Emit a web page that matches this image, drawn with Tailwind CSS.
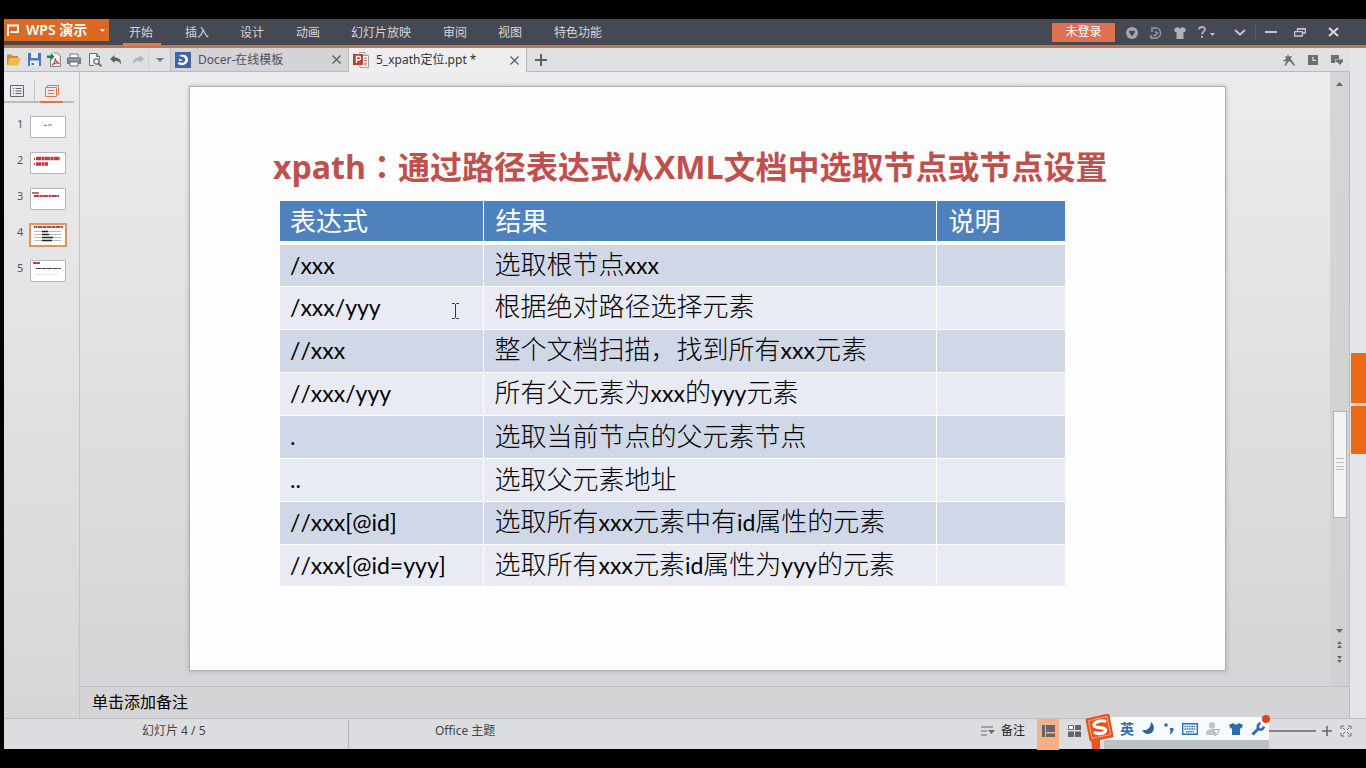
<!DOCTYPE html>
<html lang="zh-CN">
<head>
<meta charset="utf-8">
<title>WPS 演示 - 5_xpath定位.ppt</title>
<script src="https://cdn.jsdelivr.net/npm/@tailwindcss/browser@4"></script>
</head>
<body class="flex h-screen min-h-[640px] flex-col overflow-hidden bg-black py-[19px] pl-1 font-['Noto_Sans','Noto_Sans_CJK_SC',sans-serif] text-xs text-[#333]">

<!-- Title bar and ribbon tabs -->
<header class="flex h-[29px] shrink-0 items-start border-b-3 border-[#bd7653] bg-[#464852] text-[#d5d6db]">
  <button class="flex h-[22px] w-[105px] items-center bg-[#da6a22] text-white">
    <svg class="ml-[3px] h-3 w-3" viewBox="0 0 12 12" fill="none" stroke="#fff" stroke-width="2"><path d="M1 12V1.500H11V8H3.500"/></svg>
    <span class="ml-[7px] text-sm font-semibold">WPS 演示</span>
    <svg class="ml-auto mr-1 h-[3px] w-[5px]" viewBox="0 0 5 3" fill="#fff"><path d="M0 0H5L2.500 3Z"/></svg>
  </button>
  <nav class="ml-[14px] flex h-[29px] gap-6">
    <button class="h-[27px] border-b-3 border-[#e07a48] pl-[6px] pr-2 pt-[3px]">开始</button>
    <button class="h-[27px] border-b-3 border-transparent pr-[7px] pt-[3px]">插入</button>
    <button class="h-[27px] border-b-3 border-transparent pr-2 pt-[3px]">设计</button>
    <button class="h-[27px] border-b-3 border-transparent pr-[7px] pt-[3px]">动画</button>
    <button class="h-[27px] border-b-3 border-transparent pr-2 pt-[3px]">幻灯片放映</button>
    <button class="h-[27px] border-b-3 border-transparent pr-[7px] pt-[3px]">审阅</button>
    <button class="h-[27px] border-b-3 border-transparent pr-2 pt-[3px]">视图</button>
    <button class="h-[27px] border-b-3 border-transparent pr-2 pt-[3px]">特色功能</button>
  </nav>
  <div class="ml-auto flex h-[26px] items-center pr-[15px]">
    <button class="mr-[5px] h-[19px] w-[63px] bg-[#dd7152] leading-[18px] text-white">未登录</button>
    <button aria-label="在线服务" class="flex w-6 justify-center"><svg class="mt-[2px] h-3 w-3" viewBox="0 0 12 12"><circle cx="6" cy="6" r="6" fill="#a5a6ac"/><path d="M2.800 4.800Q4.500 2.500 6 4 7.500 2.500 9.200 4.800L6 9.500Z" fill="#464852"/></svg></button>
    <button aria-label="稻壳" class="flex w-6 justify-center"><svg class="mt-[2px] h-3 w-3" viewBox="0 0 12 12" fill="none" stroke="#989aa1" stroke-width="1.500"><path d="M2 5V1H6A4.500 5 0 0 1 6 11H1V8M5 4.500 7.500 6 5.500 8.500 3.500 8"/></svg></button>
    <button aria-label="皮肤" class="flex w-6 justify-center"><svg class="mt-[2px] h-3 w-3" viewBox="0 0 12 12" fill="#b0b1b6"><path d="M0 2 3.500 0Q6 2.500 8.500 0L12 2 11 5H9.500V12H2.500V5H1Z"/></svg></button>
    <button aria-label="帮助" class="flex w-7 items-center justify-center gap-1"><svg class="h-3 w-2" viewBox="0 0 8 12" fill="none" stroke="#b0b1b6" stroke-width="1.800"><path d="M1 3.500Q1.200 1 4 1T7 3.500C7 5.500 4 5.500 4 8.500M4 10V12"/></svg><svg class="mt-1 h-[3px] w-[5px]" viewBox="0 0 5 3" fill="#c5c6cb"><path d="M0 0H5L2.500 3Z"/></svg></button>
    <button aria-label="折叠功能区" class="ml-[5px] flex w-[30px] justify-center"><svg class="h-[7px] w-3" viewBox="0 0 12 7" fill="none" stroke="#c5c6cb" stroke-width="2"><path d="M1 1 6 5.500 11 1"/></svg></button>
    <span class="h-[14px] w-px bg-[#5b5d66]"></span>
    <button aria-label="最小化" class="flex w-[29px] justify-center"><svg class="h-3 w-3" viewBox="0 0 12 12" fill="#c5c6cb"><path d="M0 5H12V7H0Z"/></svg></button>
    <button aria-label="还原" class="flex w-[30px] justify-center"><svg class="h-3 w-3" viewBox="0 0 12 12" fill="none" stroke="#c5c6cb" stroke-width="1.300"><path d="M3.500 5V2.600H11.400V7H8.500M.6 5.600H8.400V10H.6ZM3.500 3H11"/></svg></button>
    <button aria-label="关闭" class="flex w-9 justify-center"><svg class="h-[10px] w-[11px]" viewBox="0 0 11 10" fill="none" stroke="#d5d6db" stroke-width="2.200"><path d="M1 1 10 9M10 1 1 9"/></svg></button>
  </div>
</header>

<div class="flex min-h-0 flex-1">
  <div class="flex min-w-0 flex-1 flex-col">

    <!-- Quick access toolbar and document tabs -->
    <div class="flex h-6 shrink-0 border-b border-[#b9b9c0] bg-[#dfe0e2]">
      <div class="flex w-[166px] shrink-0 items-center">
        <button aria-label="打开" class="flex w-[18px] justify-center"><svg class="h-[13px] w-[15px]" viewBox="0 0 15 13"><path d="M1 12V1.500H5.500L7 3H12V12Z" fill="#d08a2c"/><path d="M1 12.500 3.500 5H15L12 12.500Z" fill="#f0b94c"/></svg></button>
        <button aria-label="保存" class="ml-[5px] flex w-[14px] justify-center"><svg class="h-[13px] w-[13px]" viewBox="0 0 13 13"><path d="M0 0H13V13H0Z" fill="#4a76bd"/><path d="M3 0H10V5H3ZM2 7.500H11V13H2Z" fill="#e8eef8"/><path d="M3.500 10H6V12H3.500Z" fill="#4a76bd"/></svg></button>
        <button aria-label="输出为PDF" class="ml-[6px] flex w-[14px] justify-center"><svg class="h-[15px] w-[14px]" viewBox="0 0 14 15" fill="none"><path d="M3.500 5V14.400H13.400V4L10.500 1H7" fill="#f1f1f4" stroke="#807d88"/><path d="M0 3.500H4V1L7.500 4.500 4 8V6H0Z" fill="#258043"/><path d="M5 13C7.500 11 8.500 8.500 8 6.500 9 10 10.500 11 12.500 11.500 10 10.500 7.500 11 5 13Z" stroke="#c93d4a" stroke-width="1.100"/></svg></button>
        <button aria-label="打印" class="ml-[6px] flex w-[14px] justify-center"><svg class="h-[14px] w-[14px]" viewBox="0 0 14 14"><path d="M3 1H11V5H3Z" fill="#fff" stroke="#777984"/><path d="M0 4.500H14V11H0Z" fill="#777984"/><path d="M3 9H11V13H3Z" fill="#fff" stroke="#777984"/><path d="M2 6.500H12V7.300H2Z" fill="#d0d0d5"/></svg></button>
        <button aria-label="打印预览" class="ml-2 flex w-[13px] justify-center"><svg class="h-[14px] w-[13px]" viewBox="0 0 13 14" fill="none" stroke="#6a6b75"><path d="M5 12.500H.5V.5H7.500L10.500 3.500V6M7.500.5V3.500H10.500" fill="#f2f2f4"/><circle cx="7.500" cy="8.500" r="2.700" stroke-width="1.300"/><path d="M9.500 10.500 12.500 13.500" stroke-width="1.800"/></svg></button>
        <button aria-label="撤销" class="ml-2 flex w-[12px] justify-center"><svg class="h-[10px] w-3" viewBox="0 0 12 10" fill="#606168"><path d="M0 4 4.500 0V2.500C9 2.500 11.500 5 11 9.500 9.500 6.500 8 6 4.500 6V8Z"/></svg></button>
        <button aria-label="恢复" class="ml-[10px] flex w-[12px] justify-center"><svg class="h-[10px] w-3" viewBox="0 0 12 10" fill="#b3b3b8"><path d="M12 4 7.500 0V2.500C3 2.500 .5 5 1 9.500 2.500 6.500 4 6 7.500 6V8Z"/></svg></button>
        <span class="ml-1 h-5 w-px bg-[#cfcfd3]"></span>
        <button aria-label="自定义快速访问" class="flex flex-1 justify-center"><svg class="h-1 w-2" viewBox="0 0 8 4" fill="#77777d"><path d="M0 0H8L4 4Z"/></svg></button>
      </div>
      <div class="flex w-[178px] shrink-0 items-center border-l border-[#bcbcc2] bg-[#d3d3d8] pl-[4px] pr-[7px]">
        <svg class="h-4 w-4" viewBox="0 0 16 16"><path d="M0 0H16V16H0Z" fill="#3f65a4"/><path d="M4 4C5 3 10 1.500 12.300 5 14.500 9.500 11 13 7 13.200 4.500 13.200 3 12 3 12L3.500 10C6 11.500 10 11 10.300 8 10.500 5 7 4.500 4 4ZM4 6.500 8 8.500 4 9Z" fill="#fff"/></svg>
        <button class="ml-[7px] pt-px text-[#505058]">Docer-在线模板</button>
        <button aria-label="关闭 Docer" class="ml-auto"><svg class="h-[9px] w-[9px]" viewBox="0 0 9 9" stroke="#5b5b62" stroke-width="1.300"><path d="M.5.5 8.500 8.500M8.500.5.5 8.500"/></svg></button>
      </div>
      <div class="-mb-px flex w-[179px] shrink-0 items-center border-x border-[#b9b9c0] bg-[#eeeef0] pl-[4px] pr-[7px]">
        <svg class="h-4 w-4" viewBox="0 0 16 16"><path d="M6 .5H12V3M8 3.500H15.500V15.500H7V13" fill="#fff" stroke="#a69b97"/><path d="M11 6H14M11 8.500H14M11 11H14M11 13H14" stroke="#9b6a5b"/><path d="M0 2H10V13H0Z" fill="#b8442d"/><path d="M3.500 11V4.500H6Q7.500 4.500 7.500 6.200T6 8H4" fill="none" stroke="#fff" stroke-width="1.300"/></svg>
        <button class="ml-[7px]">5_xpath定位.ppt *</button>
        <button aria-label="关闭 5_xpath定位.ppt" class="ml-auto"><svg class="h-[9px] w-[9px]" viewBox="0 0 9 9" stroke="#5b5b62" stroke-width="1.300"><path d="M.5.5 8.500 8.500M8.500.5.5 8.500"/></svg></button>
      </div>
      <button aria-label="新建" class="ml-2"><svg class="h-3 w-3" viewBox="0 0 12 12" stroke="#5f5f67" stroke-width="2"><path d="M6 0V12M0 6H12"/></svg></button>
      <div class="ml-auto flex items-center gap-[13px] pr-[7px]">
        <button aria-label="特效"><svg class="h-3 w-3" viewBox="0 0 12 12" fill="#6d6d74"><path d="M5 0 6 2.500 9 2 7.500 4.500 12 11 11 12 6.500 7 5 8.500 2.500 12 1.500 11.500 3.500 7 0 7.500 1 6 3.500 4.500 1.500 2.500 4 2.500Z"/></svg></button>
        <button aria-label="历史"><svg class="h-[10px] w-[10px]" viewBox="0 0 10 10"><path d="M0 0H10V10H0Z" fill="#6d6d74"/><path d="M5 2V5.500H8" fill="none" stroke="#e5e5e8" stroke-width="1.200"/></svg></button>
        <button aria-label="窗口"><svg class="h-[10px] w-3" viewBox="0 0 12 10" fill="#6d6d74"><path d="M0 0H8V4H4V8H0Z"/><path d="M4.500 4.500H12V6.500L9 10 6 7H4.500Z"/></svg></button>
      </div>
    </div>

    <div class="flex min-h-0 flex-1">
      <!-- Slide thumbnails -->
      <aside class="flex w-[76px] shrink-0 flex-col border-r border-[#c3c4c8] bg-linear-to-b from-[#ececee] to-[#d5d6d6] pt-2">
        <div class="mr-[5px] flex h-[23px] border-b-2 border-[#bbbbc1]">
          <button aria-label="大纲" class="flex w-[31px] items-center border-r border-[#c6c6ca] pl-[6px]"><svg class="h-3 w-[14px]" viewBox="0 0 14 12" fill="none" stroke="#64646c"><path d="M.5.5H13.500V11.500H.5Z"/><path d="M3 3.500H4M5.500 3.500H11.500M3 6H4M5.500 6H11.500M3 8.500H4M5.500 8.500H11.500"/></svg></button>
          <button aria-label="幻灯片" class="-mb-[2px] ml-[5px] flex w-[23px] items-center justify-center border-b-2 border-[#d77a4a]"><svg class="h-3 w-[14px]" viewBox="0 0 14 12" fill="none" stroke="#d77a4a"><path d="M.5 2.500H11.500V11.500H.5ZM2.500 2V.5H13.500V9.500H12M3 5.500H9M3 8.500H9"/></svg></button>
        </div>
        <ol class="mt-[13px] flex flex-col gap-[14px] text-[11px] text-[#55555b]">
          <li class="flex h-[22px] pl-[13px]"><span class="w-[13px] leading-4">1</span><button aria-label="幻灯片 1" class="h-[22px] w-9 border border-[#b7b7bd] bg-white"><svg viewBox="0 0 34 20" stroke="#777" stroke-width="1.200"><path d="M13 8.500H16M17 8H21"/></svg></button></li>
          <li class="flex h-[22px] pl-[13px]"><span class="w-[13px] leading-4">2</span><button aria-label="幻灯片 2" class="h-[22px] w-9 border border-[#b7b7bd] bg-white"><svg viewBox="0 0 34 20" stroke="#b53d45"><path d="M3 6H4M3 11H4" stroke-width="2"/><path d="M5 5.500H29M5 11H17" stroke-width="3.500" stroke-dasharray="5 .5 3 .4"/></svg></button></li>
          <li class="flex h-[22px] pl-[13px]"><span class="w-[13px] leading-4">3</span><button aria-label="幻灯片 3" class="h-[22px] w-9 border border-[#b7b7bd] bg-white"><svg viewBox="0 0 34 20" stroke="#b53d45"><path d="M1 4H8" stroke-width="1.500"/><path d="M3 7H28" stroke-width="2" stroke-dasharray="5 .5 3 .4"/></svg></button></li>
          <li class="flex h-[22px] pl-[13px]"><span class="w-[13px] leading-4">4</span><button aria-label="幻灯片 4" aria-current="true" class="h-[22px] w-9 bg-white outline-2 -outline-offset-1 outline-[#e5935a]"><svg viewBox="0 0 36 22"><path d="M4 3H33" stroke="#a94c48" stroke-width="1.800" stroke-dasharray="3 .5 5 .5"/><path d="M4 7.500H31M4 10.500H31M4 13.500H31M4 16.500H31" stroke="#aaa" stroke-width=".8"/><path d="M12 7.500H18M12 10.500H19M12 13.500H23M12 16.500H22" stroke="#222" stroke-width="1.500"/></svg></button></li>
          <li class="flex h-[22px] pl-[13px]"><span class="w-[13px] leading-4">5</span><button aria-label="幻灯片 5" class="h-[22px] w-9 border border-[#b7b7bd] bg-white"><svg viewBox="0 0 34 20"><path d="M2 2H9" stroke="#a94c48" stroke-width="2"/><path d="M5 7.500H30" stroke="#444" stroke-width="1.200" stroke-dasharray="5 .6"/><path d="M5 13.500H27" stroke="#e1e1e1" stroke-width=".8"/></svg></button></li>
        </ol>
      </aside>

      <!-- Editing canvas with notes below -->
      <div class="flex min-w-0 flex-1 flex-col border-r border-[#bdbdc2] bg-linear-to-b from-[#ececee] to-[#d3d3d5]">
        <div class="flex min-h-0 flex-1">
          <main class="flex min-w-0 flex-1 pb-[15px] pl-[109px] pr-[104px] pt-[14px]">
            <section class="relative flex-1 border border-[#adadb0] bg-[#fdfdfd] pl-[83px] pt-[56px] shadow-[0_0_5px_#0003]">
              <h1 class="h-11 whitespace-nowrap font-['Open_Sans','Noto_Sans_CJK_SC',sans-serif] text-[32px] font-bold leading-[44px] text-[#c0504d]">xpath<span lang="zh-TW" class="font-['Noto_Sans_CJK_TC']">：</span>通过路径表达式从XML文档中选取节点或节点设置</h1>
              <table class="ml-[7px] mt-[14px] w-[785px] table-fixed border-collapse text-left font-['Lato','Noto_Sans_CJK_SC',sans-serif] text-[26px] text-black [font-kerning:none]">
                <colgroup><col class="w-[203px]"><col class="w-[453px]"><col></colgroup>
                <thead class="bg-[#4f81bd] leading-10 text-white">
                  <tr class="h-[42px] border-b-4 border-white"><th class="border-r border-white pl-[10px] font-normal">表达式</th><th class="border-r border-white pl-3 font-normal">结果</th><th class="pl-3 font-normal">说明</th></tr>
                </thead>
                <tbody class="align-top font-light leading-[38px]">
                  <tr class="h-[43px] border-b border-white bg-[#d0d8e8]"><td class="border-r border-white pl-[10px] text-[23px] font-normal leading-10">/xxx</td><td class="border-r border-white pl-[11px]">选取根节点<span class="text-[23px] font-normal">xxx</span></td><td></td></tr>
                  <tr class="h-[43px] border-b border-white bg-[#e9ebf4]"><td class="border-r border-white pl-[10px] text-[23px] font-normal leading-10">/xxx/yyy</td><td class="border-r border-white pl-[11px]">根据绝对路径选择元素</td><td></td></tr>
                  <tr class="h-[43px] border-b border-white bg-[#d0d8e8]"><td class="border-r border-white pl-[10px] text-[23px] font-normal leading-10">//xxx</td><td class="border-r border-white pl-[11px]">整个文档扫描，找到所有<span class="text-[23px] font-normal">xxx</span>元素</td><td></td></tr>
                  <tr class="h-[43px] border-b border-white bg-[#e9ebf4]"><td class="border-r border-white pl-[10px] text-[23px] font-normal leading-10">//xxx/yyy</td><td class="border-r border-white pl-[11px]">所有父元素为<span class="text-[23px] font-normal">xxx</span>的<span class="text-[23px] font-normal">yyy</span>元素</td><td></td></tr>
                  <tr class="h-[43px] border-b border-white bg-[#d0d8e8]"><td class="border-r border-white pl-[10px] text-[23px] font-normal leading-10">.</td><td class="border-r border-white pl-[11px] leading-10">选取当前节点的父元素节点</td><td></td></tr>
                  <tr class="h-[43px] border-b border-white bg-[#e9ebf4]"><td class="border-r border-white pl-[10px] text-[23px] font-normal leading-10">..</td><td class="border-r border-white pl-[11px] leading-10">选取父元素地址</td><td></td></tr>
                  <tr class="h-[43px] border-b border-white bg-[#d0d8e8]"><td class="border-r border-white pl-[10px] text-[23px] font-normal leading-10">//xxx[@id]</td><td class="border-r border-white pl-[11px]">选取所有<span class="text-[23px] font-normal">xxx</span>元素中有<span class="text-[23px] font-normal">id</span>属性的元素</td><td></td></tr>
                  <tr class="h-[42px] bg-[#e9ebf4]"><td class="border-r border-white pl-[10px] text-[23px] font-normal leading-10">//xxx[@id=yyy]</td><td class="border-r border-white pl-[11px]">选取所有<span class="text-[23px] font-normal">xxx</span>元素<span class="text-[23px] font-normal">id</span>属性为<span class="text-[23px] font-normal">yyy</span>的元素</td><td></td></tr>
                </tbody>
              </table>
              <svg class="absolute left-[261px] top-[216px] h-4 w-[9px]" viewBox="0 0 9 16" fill="none" stroke="#333"><path d="M1 .5H3.500L4.500 1.500 5.500.5H8M4.500 1.500V14.500M1 15.500H3.500L4.500 14.500 5.500 15.500H8"/></svg>
            </section>
          </main>
          <!-- Vertical scroll bar -->
          <div class="flex w-[19px] shrink-0 flex-col items-center bg-[#cfd0d2]/80 pb-[23px] pt-[10px]">
            <button aria-label="向上滚动"><svg class="h-1 w-[7px]" viewBox="0 0 7 4" fill="#66666c"><path d="M0 4H7L3.500 0Z"/></svg></button>
            <div class="flex min-h-0 w-full flex-1 flex-col items-center">
              <span class="flex-[327_1_0]"></span>
              <button aria-label="滚动条滑块" class="flex w-[14px] flex-[105_1_0] items-center justify-center border border-[#b3b3b8] bg-[#f3f3f4]"><svg class="h-3 w-2" viewBox="0 0 8 12" stroke="#bcbcc1"><path d="M0 .5H8M0 4.500H8M0 8.500H8M0 11.500H8"/></svg></button>
              <span class="flex-[112_1_0]"></span>
            </div>
            <button aria-label="向下滚动"><svg class="h-1 w-[7px]" viewBox="0 0 7 4" fill="#66666c"><path d="M0 0H7L3.500 4Z"/></svg></button>
            <button aria-label="上一张" class="mt-2"><svg class="h-[7px] w-[5px]" viewBox="0 0 5 7" fill="#66666c"><path d="M0 3H5L2.500 0ZM0 7H5L2.500 4Z"/></svg></button>
            <button aria-label="下一张" class="mt-2"><svg class="h-[7px] w-[5px]" viewBox="0 0 5 7" fill="#66666c"><path d="M0 0H5L2.500 3ZM0 4H5L2.500 7Z"/></svg></button>
          </div>
        </div>
        <div class="h-8 shrink-0 border-t border-[#bebec2] bg-[#d4d4d6]">
          <input type="text" aria-label="备注" placeholder="单击添加备注" class="block h-[30px] w-full bg-transparent pl-3 text-base text-black outline-none placeholder:text-black">
        </div>
      </div>
    </div>
  </div>

  <!-- Collapsed task pane -->
  <div class="flex w-4 shrink-0 flex-col bg-[#e4e5e8] pl-px">
    <span class="flex-[306_1_0]"></span>
    <button aria-label="展开任务窗格" class="flex-[50_1_0] border-b-2 border-[#fbd9bb] bg-[#ec6814]"></button>
    <button aria-label="展开侧栏" class="flex-[48_1_0] border-t border-[#fbd9bb] bg-[#ec6814]"></button>
    <span class="flex-[265_1_0]"></span>
  </div>
</div>

<!-- Status bar -->
<footer class="relative flex h-[31px] shrink-0 items-center border-t border-[#bebec3] bg-[#dcdde0] pb-[6px] text-[#444]">
  <span class="w-[344px] pl-[138px]">幻灯片 4 / 5</span>
  <span class="-mb-[6px] h-[29px] w-px bg-[#b5b5ba]"></span>
  <span class="pl-[86px]">Office 主题</span>
  <div class="ml-auto flex items-center pr-[14px]">
    <button class="flex items-center gap-[6px] text-[#222]"><svg class="h-[10px] w-[14px]" viewBox="0 0 14 10"><path d="M0 1H12M0 5H6M0 9H6" stroke="#68686e" stroke-width="1.200"/><path d="M7 4H14L10.500 8Z" fill="#68686e"/></svg>备注</button>
    <button aria-label="普通视图" class="-mb-[7px] ml-3 flex h-[31px] w-[22px] justify-center bg-[#f3b086] pt-[6px]"><svg class="h-3 w-[13px]" viewBox="0 0 13 12" fill="#65636b"><path d="M0 0H3V12H0ZM4 0H13V7H4ZM4 8.500H13V12H4Z"/></svg></button>
    <button aria-label="幻灯片浏览" class="ml-[9px]"><svg class="h-3 w-[13px]" viewBox="0 0 13 12" fill="#65636b"><path d="M7 0H13V5H7ZM0 6.500H6V12H0ZM7 6.500H13V12H7Z"/><path d="M.5.5H5.500V4.500H.5Z" fill="#fff" stroke="#65636b"/></svg></button>
    <input type="range" aria-label="显示比例" class="ml-[180px] h-[2px] w-[55px] appearance-none bg-[#818188] [&::-webkit-slider-thumb]:size-0 [&::-webkit-slider-thumb]:appearance-none">
    <button aria-label="放大" class="ml-[6px]"><svg class="h-[10px] w-[10px]" viewBox="0 0 10 10" stroke="#68686e" stroke-width="1.600"><path d="M5 0V10M0 5H10"/></svg></button>
    <button aria-label="适应窗口" class="ml-2"><svg class="h-3 w-3" viewBox="0 0 12 12" fill="none" stroke="#68686e"><path d="M1 4V1H4M8 1H11V4M11 8V11H8M4 11H1V8M3 3 5 5M9 3 7 5M3 9 5 7M9 9 7 7"/></svg></button>
  </div>

  <!-- Floating input method bar -->
  <div class="absolute -top-[2px] right-[97px] h-8 w-[165px] border-b-9 border-[#bcc3c7] bg-[#f7fafc]">
    <svg class="absolute -left-[19px] -top-[3px] h-[35px] w-[29px]" viewBox="0 0 29 35" fill="none"><path d="M6 24H15V35H7Z" fill="#e9541c"/><path d="M2 6 23 1 27 22 6 26Z" fill="#e9541c" stroke="#e9541c" stroke-width="3" stroke-linejoin="round"/><path d="M3.500 6.800 22 2.500 25.500 20.500 7 24.300Z" stroke="#f6c3ae" stroke-width=".8"/><path d="M21 7.500C16 5.500 8.500 8 9 11.500S20.500 12 20.500 16 12.500 20.500 9 18" stroke="#fff" stroke-width="3.200"/></svg>
    <div class="flex h-[23px] items-center justify-between pl-4 pr-1 text-[#2a6ead]">
      <button class="text-sm font-bold">英</button>
      <button aria-label="半角"><svg class="h-[13px] w-[13px]" viewBox="0 0 13 13" fill="#2a62a8"><path d="M9 0C14 4 12 12 6 12 3 12 1 10 0 8 5 9 9 6 9 0Z"/></svg></button>
      <button aria-label="中文标点"><svg class="h-[11px] w-[10px]" viewBox="0 0 10 11" fill="#2a6ead"><circle cx="2" cy="2" r="1.800"/><path d="M6 5H9.500V7.500L7 11H5.500L7 8H6Z"/></svg></button>
      <button aria-label="软键盘"><svg class="h-3 w-4" viewBox="0 0 16 12"><path d="M.7.7H15.300V11.300H.7Z" fill="#fff" stroke="#2a6ead" stroke-width="1.400"/><path d="M2.500 3.500H13.500M2.500 6H13.500M4 8.800H12" stroke="#2a6ead" stroke-width="1.400" stroke-dasharray="1.600 .7"/></svg></button>
      <button aria-label="账户"><svg class="h-[14px] w-[14px]" viewBox="0 0 14 14"><circle cx="6" cy="3.500" r="3.200" fill="#c0c4c8"/><path d="M0 13V10Q1 7 6 7T12 10V13Z" fill="#c0c4c8"/><path d="M7.500 7.500H13.500L12 11 9 14V10H7Z" fill="#f5f5f5" stroke="#a5a9ad"/></svg></button>
      <button aria-label="皮肤中心"><svg class="h-3 w-[14px]" viewBox="0 0 14 12" fill="#2a6ead"><path d="M0 2 4 0Q7 3 10 0L14 2 12.500 5.500H11V12H3V5.500H1.500Z"/></svg></button>
      <button aria-label="工具箱"><svg class="h-[14px] w-[14px]" viewBox="0 0 14 14" fill="none" stroke="#2a6ead"><path d="M1.500 12.500 7.500 6.500" stroke-width="3"/><path d="M9.500 1C7 2 6 4.500 7.500 6.500S12 8 13 4.500" stroke-width="2.600"/></svg></button>
    </div>
    <span class="absolute -right-[1px] -top-[2px] size-2 rounded-full bg-[#dc4615]"></span>
  </div>
</footer>
</body>
</html>
